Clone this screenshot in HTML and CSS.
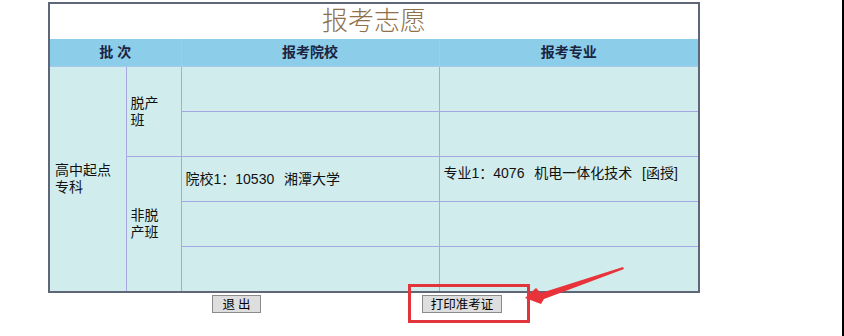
FILE: index.html
```html
<!DOCTYPE html>
<html lang="zh">
<head>
<meta charset="utf-8">
<link rel="stylesheet" href="styles.css">
</head>
<body>
<div class="page">
  <table class="vol">
    <colgroup><col class="c1"><col class="c2"><col class="c3"><col class="c4"></colgroup>
    <tr class="title"><td colspan="4">报考志愿</td></tr>
    <tr class="head"><th colspan="2">批 次</th><th>报考院校</th><th>报考专业</th></tr>
    <tr class="row"><td rowspan="5" class="batch">高中起点<br>专科</td><td rowspan="2" class="type">脱产<br>班</td><td></td><td></td></tr>
    <tr class="row"><td></td><td></td></tr>
    <tr class="row"><td rowspan="3" class="type">非脱<br>产班</td><td class="info">院校1：10530&nbsp;&nbsp;湘潭大学</td><td class="info top">专业1：4076&nbsp;&nbsp;机电一体化技术&nbsp;&nbsp;[函授]</td></tr>
    <tr class="row"><td></td><td></td></tr>
    <tr class="row"><td></td><td></td></tr>
  </table>
  <div class="actions">
    <button class="btn exit">退 出</button>
    <button class="btn print">打印准考证</button>
  </div>
  <svg class="mark" width="844" height="336" viewBox="0 0 844 336">
    <rect x="409.5" y="285.5" width="119" height="36" fill="none" stroke="#e2353b" stroke-width="3"/>
    <polygon points="525,298 536,288 541,293 623,267 624,269 544,299 541,304" fill="#e8333a"/>
  </svg>
</div>
</body>
</html>
```
FILE: styles.css
```css
html, body { margin: 0; padding: 0; background: #fff; }
.page {
  position: relative;
  width: 844px;
  height: 336px;
  box-sizing: border-box;
  border-right: 2px solid #000;
  padding: 2px 0 0 48px;
  font-family: "Liberation Sans", "Noto Sans CJK SC", sans-serif;
  font-size: 14px;
  color: #111;
}
.vol {
  border-collapse: collapse;
  table-layout: fixed;
  width: 650px;
  border: 2px solid #5f6678;
}
.c1 { width: 77px; }
.c2 { width: 55px; }
.c3 { width: 258px; }
.c4 { width: 260px; }
.vol td, .vol th {
  border: 1px solid #a6a8e4;
  padding: 0 4px;
  line-height: 17px;
}
.title td {
  background: #fff;
  height: 35px;
  text-align: center;
  font-size: 26px;
  font-weight: 300;
  color: #8f7048;
  border: none;
  padding: 0;
  line-height: 35px;
}
.head th {
  background: #8ccdea;
  height: 27px;
  font-weight: bold;
  color: #1b2440;
  border-top: none;
  border-color: #a9c9ea;
  padding: 0;
}
.row td {
  background: #d1ecec;
  height: 44px;
  vertical-align: middle;
}
.batch { padding-left: 5px !important; }
.row td.info { word-spacing: 1px; }
.row td.top { vertical-align: top; padding-top: 8px; height: 36px; }
.actions {
  display: flex;
  margin-top: 2px;
}
.btn {
  height: 18px;
  box-sizing: border-box;
  padding: 0 6px;
  font-family: "Noto Sans CJK SC", sans-serif;
  font-size: 12.5px;
  line-height: 16px;
  background: #dedede;
  border: 1px solid #8a8a8a;
  color: #000;
}
.exit { width: 49px; margin-left: 164px; }
.print { width: 80px; margin-left: 161px; }
.mark { position: absolute; left: 0; top: 0; pointer-events: none; }
```
